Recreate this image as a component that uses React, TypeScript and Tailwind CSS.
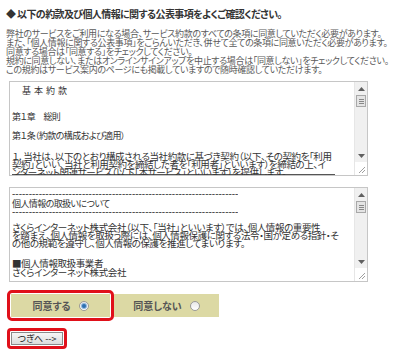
import React from 'react';

const jp = "font-['Noto_Sans_CJK_JP','Noto_Sans',sans-serif] [font-feature-settings:'palt']";

function Dashes() {
  return (
    <div className="w-[226px] overflow-hidden whitespace-nowrap text-[10px] leading-[8px] text-[#444] font-['Liberation_Sans',sans-serif]">
      {'-'.repeat(90)}
    </div>
  );
}

function ScrollBar() {
  return (
    <div className="w-[13px] flex flex-col bg-[#f0f0f0] border-l border-[#e6e6e6]">
      <div className="h-[13px] flex items-center justify-center">
        <svg width="7" height="4" viewBox="0 0 7 4"><path d="M0 4 L3.5 0 L7 4 Z" fill="#606060" /></svg>
      </div>
      <div className="h-[12px] mx-[1px] border border-[#a8a8a8] bg-[#e4e4e4] flex flex-col items-center justify-center gap-[1px]">
        <div className="w-[5px] h-px bg-[#888]" />
        <div className="w-[5px] h-px bg-[#888]" />
        <div className="w-[5px] h-px bg-[#888]" />
      </div>
      <div className="flex-1" />
      <div className="h-[13px] flex items-center justify-center">
        <svg width="7" height="4" viewBox="0 0 7 4"><path d="M0 0 L3.5 4 L7 0 Z" fill="#606060" /></svg>
      </div>
      <div className="h-[13px] bg-white flex items-end justify-end p-[1px]">
        <svg width="9" height="9" viewBox="0 0 9 9">
          <path d="M8 2 L2 8 M8 5 L5 8" stroke="#a0a0a0" strokeWidth="1" />
        </svg>
      </div>
    </div>
  );
}

function Box({ children }: { children: React.ReactNode }) {
  return (
    <div className="ml-[3px] w-[359px] h-[95px] border border-[#c6c6c6] flex bg-white">
      <div className="flex-1 overflow-hidden pl-[2px] text-[#333]">{children}</div>
      <ScrollBar />
    </div>
  );
}

function Radio({ checked }: { checked?: boolean }) {
  return (
    <span className="w-[10px] h-[10px] rounded-full border border-[#9a9a9a] bg-gradient-to-b from-[#e8e8e8] to-white flex items-center justify-center">
      {checked && <span className="w-[4px] h-[4px] rounded-full bg-[#2f6fb0] ring-1 ring-[#8ab4dc]" />}
    </span>
  );
}

export default function App() {
  return (
    <div className={`w-[400px] h-[356px] bg-white pl-[6px] pt-[8px] overflow-hidden ${jp}`}>
      <div className="text-[10px] tracking-[-0.6px] leading-[12px] font-bold text-[#333] whitespace-nowrap">
        ◆ 以下の約款及び個人情報に関する公表事項をよくご確認ください。
      </div>

      <div className="mt-[9px] text-[9px] tracking-[-0.35px] leading-[9px] text-[#5a5a5a] whitespace-nowrap">
        <div>弊社のサービスをご利用になる場合、サービス約款のすべての条項に同意していただく必要があります。</div>
        <div>また、「個人情報に関する公表事項」をごらんいただき、併せて全ての条項に同意いただく必要があります。</div>
        <div>同意する場合は「同意する」をチェックしてください。</div>
        <div>規約に同意しない、またはオンラインサインアップを中止する場合は「同意しない」をチェックしてください。</div>
        <div>この規約はサービス案内のページにも掲載していますので随時確認していただけます。</div>
      </div>

      <div className="mt-[7px]">
        <Box>
          <div className="whitespace-nowrap">
            <div className="mt-[4px] text-[9px] leading-[10px] pl-[10px] tracking-[3px]">基本約款</div>
            <div className="mt-[16px] text-[9px] tracking-[-0.6px] leading-[10px]">第１章　総則</div>
            <div className="mt-[9px] text-[9px] tracking-[-0.6px] leading-[10px]">第１条（約款の構成および適用）</div>
            <div className="mt-[11px] text-[9.5px] tracking-[-0.4px] leading-[8px]">
              <div>１．当社は、以下のとおり構成される当社約款に基づき契約（以下、その契約を「利用</div>
              <div>契約」といい、当社と利用契約を締結した者を「利用者」といいます）を締結の上、イ</div>
              <div>ンターネット関連サービス（以下「本サービス」といいます）を提供します。</div>
            </div>
            <div className="-mt-[2px] w-[323px] h-[2px] bg-[#555]" />
          </div>
        </Box>
      </div>

      <div className="mt-[11px]">
        <Box>
          <div className="whitespace-nowrap">
            <div className="mt-[2px]"><Dashes /></div>
            <div className="mt-[1px] text-[9px] tracking-[-0.6px] leading-[9px]">個人情報の取扱いについて</div>
            <div><Dashes /></div>
            <div className="mt-[7px] text-[9.5px] tracking-[-0.4px] leading-[8px]">
              <div>さくらインターネット株式会社（以下、「当社」といいます）では、個人情報の重要性</div>
              <div>を踏まえ、個人情報を取扱う際には、個人情報保護に関する法令・国が定める指針・そ</div>
              <div>の他の規範を遵守し、個人情報の保護を推進してまいります。</div>
            </div>
            <div className="mt-[12px] text-[9.5px] tracking-[-0.4px] leading-[9px]">
              <div>■個人情報取扱事業者</div>
              <div>さくらインターネット株式会社</div>
            </div>
          </div>
        </Box>
      </div>

      <div className="mt-[8px] ml-[1px] flex items-center">
        <div className="border-[3px] border-[#e0101a] rounded-[5px] p-[1px] bg-white">
          <div className="w-[99px] h-[23px] bg-[#dcd9a4] flex items-center justify-center gap-[8px] text-[10px] font-bold text-[#555]">
            <span>同意する</span>
            <Radio checked />
          </div>
        </div>
        <div className="w-[105px] h-[23px] bg-[#dcd9a4] flex items-center justify-center gap-[8px] text-[10px] font-bold text-[#555]">
          <span>同意しない</span>
          <Radio />
        </div>
      </div>

      <div className="mt-[7px] ml-[1px] w-[60px] border-[3px] border-[#e0101a] rounded-[4px] p-[1px]">
        <button className="w-full h-[13px] border border-[#8a8a8a] bg-gradient-to-b from-[#f6f6f6] to-[#dcdcdc] text-[9px] leading-[11px] text-[#222] flex items-center justify-center">
          つぎへ --&gt;
        </button>
      </div>
    </div>
  );
}
